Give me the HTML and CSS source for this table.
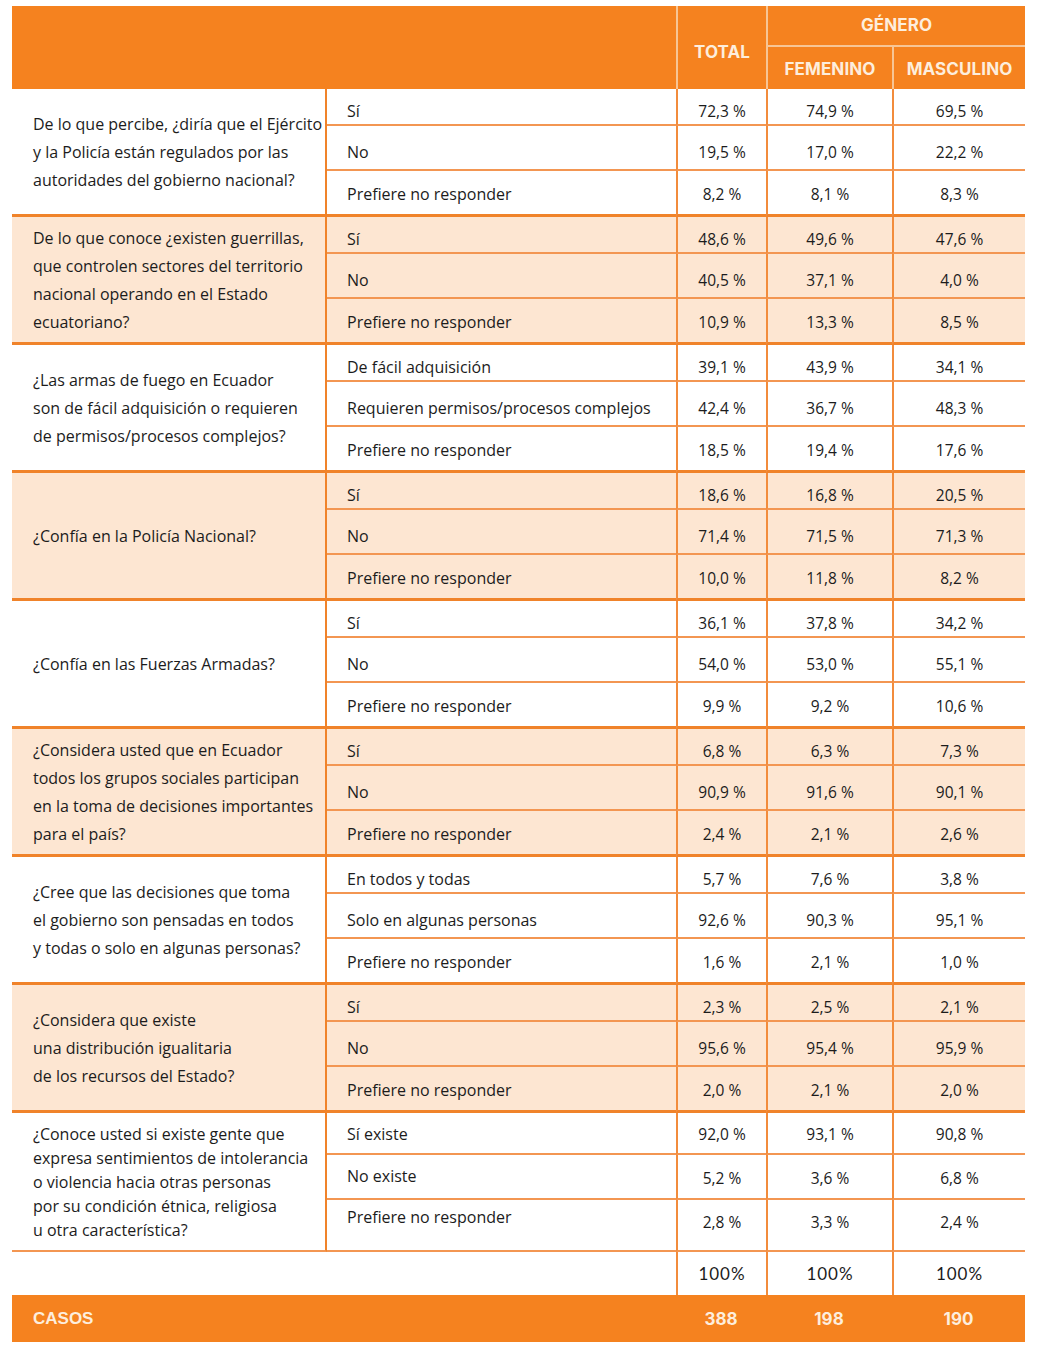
FILE: index.html
```html
<!DOCTYPE html>
<html lang="es">
<head>
<meta charset="utf-8">
<title>Encuesta</title>
<link rel="stylesheet" href="styles.css">
</head>
<body>
<div class="wrap">
<table class="survey">
  <colgroup>
    <col class="c-q"><col class="c-a"><col class="c-t"><col class="c-f"><col class="c-m">
  </colgroup>
  <thead>
    <tr class="h1">
      <th class="blank" colspan="2" rowspan="2"></th>
      <th class="hd total" rowspan="2">TOTAL</th>
      <th class="hd genero" colspan="2">GÉNERO</th>
    </tr>
    <tr class="h2">
      <th class="hd sub">FEMENINO</th>
      <th class="hd sub masc">MASCULINO</th>
    </tr>
  </thead>

  <tbody class="grp">
    <tr class="ra"><td class="q" rowspan="3">De lo que percibe, ¿diría que el Ejército<br>y la Policía están regulados por las<br>autoridades del gobierno nacional?</td><td class="a">Sí</td><td class="n">72,3 %</td><td class="n">74,9 %</td><td class="n">69,5 %</td></tr>
    <tr class="rb"><td class="a">No</td><td class="n">19,5 %</td><td class="n">17,0 %</td><td class="n">22,2 %</td></tr>
    <tr class="rc"><td class="a">Prefiere no responder</td><td class="n">8,2 %</td><td class="n">8,1 %</td><td class="n">8,3 %</td></tr>
  </tbody>

  <tbody class="grp shade">
    <tr class="ra"><td class="q" rowspan="3">De lo que conoce ¿existen guerrillas,<br>que controlen sectores del territorio<br>nacional operando en el Estado<br>ecuatoriano?</td><td class="a">Sí</td><td class="n">48,6 %</td><td class="n">49,6 %</td><td class="n">47,6 %</td></tr>
    <tr class="rb"><td class="a">No</td><td class="n">40,5 %</td><td class="n">37,1 %</td><td class="n">4,0 %</td></tr>
    <tr class="rc"><td class="a">Prefiere no responder</td><td class="n">10,9 %</td><td class="n">13,3 %</td><td class="n">8,5 %</td></tr>
  </tbody>

  <tbody class="grp">
    <tr class="ra"><td class="q" rowspan="3">¿Las armas de fuego en Ecuador<br>son de fácil adquisición o requieren<br>de permisos/procesos complejos?</td><td class="a">De fácil adquisición</td><td class="n">39,1 %</td><td class="n">43,9 %</td><td class="n">34,1 %</td></tr>
    <tr class="rb"><td class="a">Requieren permisos/procesos complejos</td><td class="n">42,4 %</td><td class="n">36,7 %</td><td class="n">48,3 %</td></tr>
    <tr class="rc"><td class="a">Prefiere no responder</td><td class="n">18,5 %</td><td class="n">19,4 %</td><td class="n">17,6 %</td></tr>
  </tbody>

  <tbody class="grp shade">
    <tr class="ra"><td class="q" rowspan="3">¿Confía en la Policía Nacional?</td><td class="a">Sí</td><td class="n">18,6 %</td><td class="n">16,8 %</td><td class="n">20,5 %</td></tr>
    <tr class="rb"><td class="a">No</td><td class="n">71,4 %</td><td class="n">71,5 %</td><td class="n">71,3 %</td></tr>
    <tr class="rc"><td class="a">Prefiere no responder</td><td class="n">10,0 %</td><td class="n">11,8 %</td><td class="n">8,2 %</td></tr>
  </tbody>

  <tbody class="grp">
    <tr class="ra"><td class="q" rowspan="3">¿Confía en las Fuerzas Armadas?</td><td class="a">Sí</td><td class="n">36,1 %</td><td class="n">37,8 %</td><td class="n">34,2 %</td></tr>
    <tr class="rb"><td class="a">No</td><td class="n">54,0 %</td><td class="n">53,0 %</td><td class="n">55,1 %</td></tr>
    <tr class="rc"><td class="a">Prefiere no responder</td><td class="n">9,9 %</td><td class="n">9,2 %</td><td class="n">10,6 %</td></tr>
  </tbody>

  <tbody class="grp shade">
    <tr class="ra"><td class="q" rowspan="3">¿Considera usted que en Ecuador<br>todos los grupos sociales participan<br>en la toma de decisiones importantes<br>para el país?</td><td class="a">Sí</td><td class="n">6,8 %</td><td class="n">6,3 %</td><td class="n">7,3 %</td></tr>
    <tr class="rb"><td class="a">No</td><td class="n">90,9 %</td><td class="n">91,6 %</td><td class="n">90,1 %</td></tr>
    <tr class="rc"><td class="a">Prefiere no responder</td><td class="n">2,4 %</td><td class="n">2,1 %</td><td class="n">2,6 %</td></tr>
  </tbody>

  <tbody class="grp">
    <tr class="ra"><td class="q" rowspan="3">¿Cree que las decisiones que toma<br>el gobierno son pensadas en todos<br>y todas o solo en algunas personas?</td><td class="a">En todos y todas</td><td class="n">5,7 %</td><td class="n">7,6 %</td><td class="n">3,8 %</td></tr>
    <tr class="rb"><td class="a">Solo en algunas personas</td><td class="n">92,6 %</td><td class="n">90,3 %</td><td class="n">95,1 %</td></tr>
    <tr class="rc"><td class="a">Prefiere no responder</td><td class="n">1,6 %</td><td class="n">2,1 %</td><td class="n">1,0 %</td></tr>
  </tbody>

  <tbody class="grp shade">
    <tr class="ra"><td class="q" rowspan="3">¿Considera que existe<br>una distribución igualitaria<br>de los recursos del Estado?</td><td class="a">Sí</td><td class="n">2,3 %</td><td class="n">2,5 %</td><td class="n">2,1 %</td></tr>
    <tr class="rb"><td class="a">No</td><td class="n">95,6 %</td><td class="n">95,4 %</td><td class="n">95,9 %</td></tr>
    <tr class="rc"><td class="a">Prefiere no responder</td><td class="n">2,0 %</td><td class="n">2,1 %</td><td class="n">2,0 %</td></tr>
  </tbody>

  <tbody class="grp last">
    <tr class="ra"><td class="q tight" rowspan="3">¿Conoce usted si existe gente que<br>expresa sentimientos de intolerancia<br>o violencia hacia otras personas<br>por su condición étnica, religiosa<br>u otra característica?</td><td class="a">Sí existe</td><td class="n">92,0 %</td><td class="n">93,1 %</td><td class="n">90,8 %</td></tr>
    <tr class="rb"><td class="a">No existe</td><td class="n">5,2 %</td><td class="n">3,6 %</td><td class="n">6,8 %</td></tr>
    <tr class="rc"><td class="a">Prefiere no responder</td><td class="n">2,8 %</td><td class="n">3,3 %</td><td class="n">2,4 %</td></tr>
  </tbody>

  <tbody class="sum">
    <tr><td class="blank" colspan="2"></td><td class="n pct">100%</td><td class="n pct">100%</td><td class="n pct">100%</td></tr>
  </tbody>

  <tfoot>
    <tr class="casos"><td class="lbl" colspan="2">CASOS</td><td class="cn">388</td><td class="cn">198</td><td class="cn">190</td></tr>
  </tfoot>
</table>
</div>
</body>
</html>
```

FILE: styles.css
```css
html, body {
  margin: 0;
  padding: 0;
  background: #ffffff;
}

.wrap {
  padding: 6px 0 0 12px;
}

.survey {
  border-collapse: separate;
  border-spacing: 0;
  table-layout: fixed;
  width: 1013px;
  font-family: "Open Sans", "Noto Sans", sans-serif;
  font-size: 16px;
  font-weight: 500;
  color: #1c1c1c;
}

.c-q { width: 315px; }
.c-a { width: 349px; }
.c-t { width: 90px; }
.c-f { width: 126px; }
.c-m { width: 133px; }

/* header */
.survey thead th {
  background: #f5821f;
  padding: 0;
  font-family: "Inter", "Lato", sans-serif;
  font-weight: 700;
  font-size: 17px;
  color: #fdeedd;
  letter-spacing: 0.1px;
}

.h1 { height: 41px; }
.h2 { height: 42px; }

.hd.total {
  border-left: 2px solid #f7c595;
  padding-top: 8px;
}

.hd.genero {
  border-left: 2px solid #f7c595;
  border-bottom: 2px solid #f7c595;
  padding-bottom: 2px;
}

.hd.sub {
  padding-top: 2px;
}

.h2 th:first-child {
  border-left: 2px solid #f7c595;
}

.hd.masc {
  border-left: 2px solid #f7c595;
}

/* body */
.survey td {
  padding: 0;
  line-height: 20px;
}

.q {
  padding-left: 21px !important;
  line-height: 28px !important;
  vertical-align: middle;
  white-space: nowrap;
  border-right: 2px solid #f0832a;
  border-bottom: 3px solid #f0832a;
}

.q.tight {
  line-height: 24px !important;
}

.a {
  padding-left: 20px !important;
  white-space: nowrap;
}

.a, .n {
  vertical-align: middle;
  padding-top: 9px !important;
}

.n {
  text-align: center;
  font-size: 15.5px;
  border-left: 2px solid #f28c3c;
}

.grp .rc td.a, .grp .rc td.n {
  padding-top: 2px !important;
}

.grp .ra td.a, .grp .ra td.n,
.grp .rb td.a, .grp .rb td.n {
  border-bottom: 2px solid #f39652;
}

.grp .rc td.a, .grp .rc td.n {
  border-bottom: 3px solid #f0832a;
}

.grp .ra { height: 37px; }
.grp .rb { height: 45px; }
.grp .rc { height: 46px; }

.grp.last .ra { height: 42px; }
.grp.last .rb { height: 45px; }
.grp.last .rc { height: 52px; }

.grp.last td.a, .grp.last td.n { vertical-align: top; }
.grp.last .ra td.a, .grp.last .ra td.n { padding-top: 11px !important; }
.grp.last .rb td.a { padding-top: 11px !important; }
.grp.last .rb td.n { padding-top: 13px !important; }
.grp.last .rc td.a { padding-top: 7px !important; }
.grp.last .rc td.n { padding-top: 12px !important; }
.grp.last .rc td { border-bottom: 2px solid #f39652; }
.grp.last .q { border-bottom: 2px solid #f39652; }

.shade td {
  background: #fde6d2;
}

/* totals */
.sum tr { height: 43px; }
.sum td.pct {
  font-family: "Lato", "Inter", sans-serif;
  font-weight: 400;
  font-size: 17px;
  letter-spacing: 1px;
  padding-top: 1px !important;
}

/* casos footer */
.casos {
  height: 47px;
}

.casos td {
  background: #f5821f;
  color: #fdeedd;
  font-family: "Inter", "Lato", sans-serif;
  font-weight: 700;
  font-size: 17px;
  vertical-align: middle;
}

.casos .lbl {
  padding-left: 21px;
  font-family: "Liberation Sans", Arial, sans-serif;
}

.casos .cn {
  text-align: center;
}
```
